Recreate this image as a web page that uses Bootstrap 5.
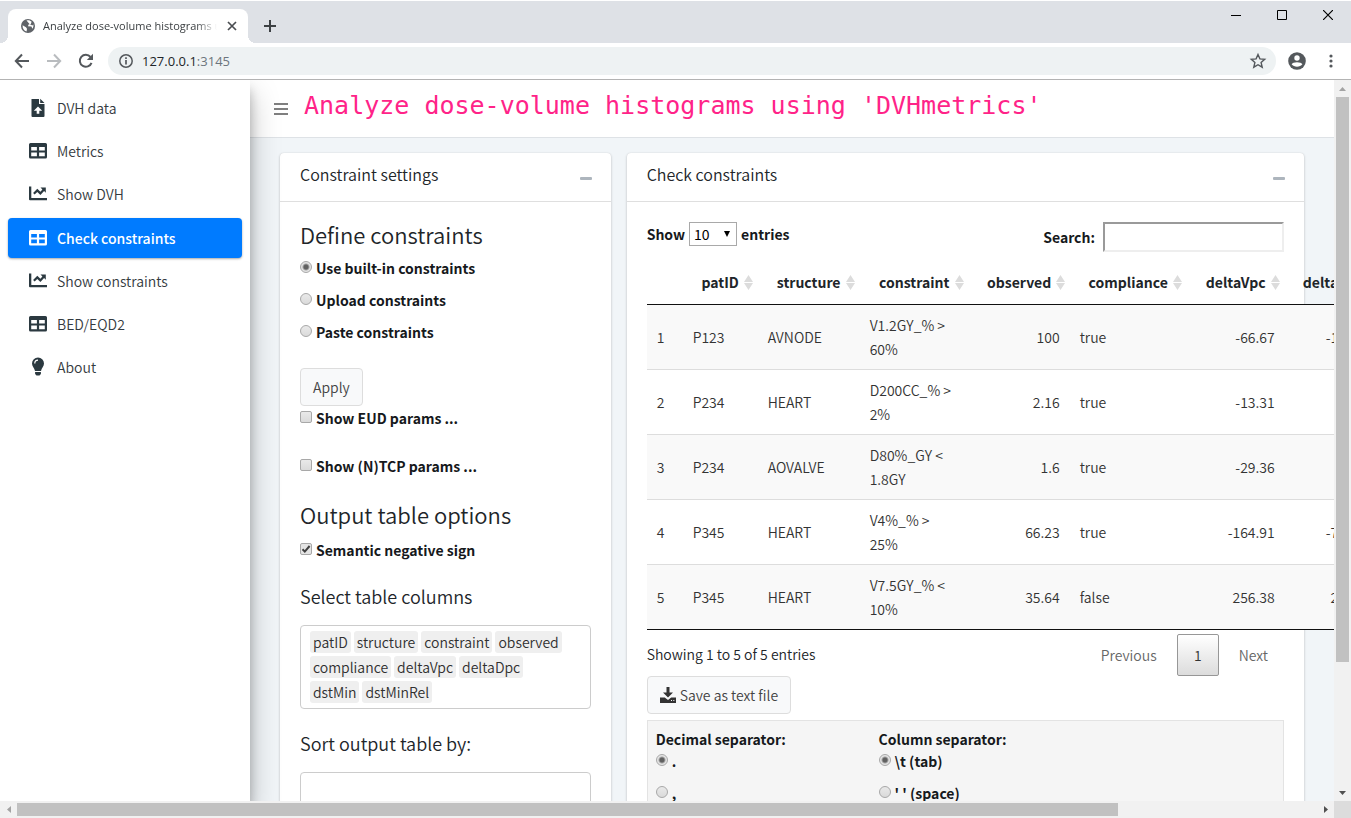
<!DOCTYPE html>
<html lang="en">
<head>
<meta charset="utf-8">
<meta name="viewport" content="width=device-width, initial-scale=1">
<title>Analyze dose-volume histograms using 'DVHmetrics'</title>
<link href="https://cdn.jsdelivr.net/npm/bootstrap@5.3.0/dist/css/bootstrap.min.css" rel="stylesheet">
<style>
  body {
    --bs-body-color: #212529;
    font-family: "Noto Sans CJK SC", "Open Sans", sans-serif;
    font-size: 14px;
    font-weight: 350;
    line-height: 24px;
    color: #212529;
    height: 100vh;
    overflow: hidden;
  }
  label, th { font-weight: 700; color: #16191c; }
  button, input, select { font: inherit; color: inherit; }

  /* browser window */
  .ui-font { font-family: "Open Sans", sans-serif; font-weight: 400; }
  .titlebar { background: #dee1e6; height: 43px; border-top: 1px solid #fff; }
  .browser-tab {
    position: relative;
    width: 240px; height: 34px;
    margin-left: 8px;
    padding: 0 9px 0 13px;
    background: #fff;
    border-radius: 8px 8px 0 0;
    color: #3c4043;
    font-size: 11px;
  }
  .browser-tab::before, .browser-tab::after {
    content: ""; position: absolute; bottom: 0; width: 8px; height: 8px;
  }
  .browser-tab::before { left: -8px; background: radial-gradient(circle at 0 0, transparent 8px, #fff 8px); }
  .browser-tab::after { right: -8px; background: radial-gradient(circle at 100% 0, transparent 8px, #fff 8px); }
  .tab-title {
    flex: 1 1 0; min-width: 0; overflow: hidden; white-space: nowrap;
    -webkit-mask-image: linear-gradient(90deg, #000 88%, transparent);
    mask-image: linear-gradient(90deg, #000 88%, transparent);
  }
  .plain-btn { border: 0; background: none; padding: 0; display: flex; align-items: center; justify-content: center; }
  .win-btn { width: 46px; height: 28px; }
  .toolbar { height: 37px; background: #fff; border-bottom: 1px solid #b3b3b3; padding: 0 4px 0 6px; }
  .nav-btn { width: 32px; height: 28px; }
  .omnibox { height: 28px; background: #eef2f3; border-radius: 14px; font-size: 13px; margin: 0 3px 0 6px; padding: 0 9px 0 8px; }
  .address { margin-left: 6px; }

  /* scroll bars */
  .track { background: #f1f1f1; }
  .track-v { width: 17px; }
  .track-h { height: 17px; }
  .thumb { background: #c1c1c1; }
  .track-v .thumb { width: 13px; }
  .track-h .thumb { height: 13px; }
  .arrow-box { width: 17px; height: 17px; flex: none; display: flex; align-items: center; justify-content: center; }
  .corner { width: 17px; background: #dcdcdc; }

  /* side bar */
  .side {
    width: 250px; flex: none; background: #fff; padding: 8px; z-index: 2;
    box-shadow: 0 14px 28px rgba(0,0,0,.25), 0 10px 10px rgba(0,0,0,.22);
  }
  .side .nav { gap: 3px; }
  .side .nav-link {
    height: 40px; padding: 8px 16px 8px 20px; color: #343a40; border-radius: 4px;
    display: flex; align-items: center; gap: 9px;
  }
  .side .nav-link svg { width: 20px; height: 20px; flex: none; fill: #2b3940; }
  .side .nav-link.active {
    background: #007bff; color: #fff; font-weight: 500; margin-top: 1px;
    box-shadow: 0 1px 3px rgba(0,0,0,.12), 0 1px 2px rgba(0,0,0,.24);
  }
  .side .nav-link.active svg { fill: #fff; }

  /* page */
  .page { background: #f1f5f8; min-width: 0; }
  .page-head { height: 58px; background: #fff; border-bottom: 1px solid #dee2e6; padding: 0 24px; }
  .page-title {
    font-family: "DejaVu Sans Mono", monospace; font-size: 25px; line-height: 32px; font-weight: 400;
    color: #ff2388; white-space: nowrap; margin: 0 0 6px 16px;
  }
  .page-body { padding: 15px 30px; }
  .panel {
    background: #fff; border: 0; border-radius: 4px;
    box-shadow: 0 0 1px rgba(0,0,0,.125), 0 1px 3px rgba(0,0,0,.2);
    height: 1100px;
  }
  .panel-head { height: 49px; border-bottom: 1px solid #dfdfdf; padding: 0 18px 6px 20px; }
  .panel-head h2 { font-size: 16px; line-height: 24px; margin: 0; font-weight: 350; }
  .panel-body { padding: 20px; }
  .sec-title { font-size: 22px; line-height: 24px; font-weight: 350; margin: 0 0 10px; }
  .choice + .sec-title { margin-bottom: 12px; }
  .sub-title { font-size: 18px; line-height: 24px; font-weight: 350; margin: 22px 0 17px; }

  .choice { display: flex; align-items: center; gap: 4px; }
  .choice input {
    appearance: none; flex: none; width: 12px; height: 12px; margin: 0 0 2px;
    border: 1px solid #a8a8a8; background: linear-gradient(#e9e9e9, #dadada);
  }
  .choice input[type=radio] { border-radius: 50%; }
  .choice input[type=checkbox] { border-radius: 2px; }
  .choice input[type=radio]:checked {
    background: radial-gradient(circle at center, #606060 0 2px, #e4e4e4 4px);
  }
  .choice input[type=checkbox]:checked {
    background: #e4e4e4 url("data:image/svg+xml,%3Csvg xmlns='http://www.w3.org/2000/svg' viewBox='0 0 10 10'%3E%3Cpath d='M1.5 5.2l2.3 2.4L8.6 2' fill='none' stroke='%23404040' stroke-width='2'/%3E%3C/svg%3E") center / 10px 10px no-repeat;
  }
  .btn-soft {
    height: 38px; padding: 0 12px; border: 1px solid #ddd; border-radius: 4px;
    background: #f8f9fa; color: #444; line-height: 24px; font-size: 14px; font-weight: 350;
  }
  .pick-box { border: 1px solid #ccc; border-radius: 4px; min-height: 84px; padding: 5px 18px 5px 9px; gap: 3px; }
  .pick { background: #efefef; border-radius: 3px; padding: 0 3px; line-height: 22px; color: #303030; }

  /* data table */
  .len-select {
    appearance: none; width: 48px; height: 24px; padding: 0 4px; border: 1px solid #a9a9a9; border-radius: 0;
    color: #000; font-weight: 400; line-height: 20px;
    background: #fff url("data:image/svg+xml,%3Csvg xmlns='http://www.w3.org/2000/svg' viewBox='0 0 6 6'%3E%3Cpath d='M0 0h6L3 6z'/%3E%3C/svg%3E") right 6px center / 6px 6px no-repeat;
  }
  .find-box { width: 181px; height: 30px; border: 2px solid; border-color: #9a9a9a #eee #eee #9a9a9a; border-radius: 0; }
  .grid-table { table-layout: fixed; width: 736px; border-collapse: separate; border-spacing: 0; color: #333; }
  .grid-table th {
    height: 45px; padding: 10px 18px; line-height: 24px; border-bottom: 1px solid #111; text-align: center; color: #212529;
  }
  .grid-table th.sorts {
    background: url("data:image/svg+xml,%3Csvg xmlns='http://www.w3.org/2000/svg' viewBox='0 0 9 15'%3E%3Cpath d='M4.5 0L9 7H0zM0 8h9l-4.500 7z' fill='%23dcdcdc'/%3E%3C/svg%3E") right 5px center / 9px 15px no-repeat;
  }
  .grid-table td { height: 65px; padding: 8px 10px; border-bottom: 1px solid #ddd; vertical-align: middle; background: #fff; }
  .grid-table tr:nth-child(odd) td { background: #f9f9f9; }
  .grid-table tr:last-child td { border-bottom-color: #111; }
  .num { text-align: right; }
  .w0 { width: 36px; } .w1 { width: 75px; } .w2 { width: 102px; } .w3 { width: 109px; }
  .w4 { width: 101px; } .w5 { width: 117px; } .w6 { width: 98px; }
  .pager { gap: 4px; padding-top: 4px; }
  .pager button { height: 42px; padding: 0 16px; border: 0; background: none; color: #666; }
  .pager .here { width: 42px; border: 1px solid #979797; border-radius: 2px; color: #333; background: linear-gradient(#fff, #dcdcdc); }
  .well { background: #f5f5f5; border: 1px solid #e3e3e3; margin-top: 6px; padding: 8px; height: 200px; }
  .well-title { font-weight: 700; line-height: 20px; color: #16191c; }
  .well .choice { margin-bottom: 8px; }
</style>
</head>
<body class="d-flex flex-column">

<header class="ui-font flex-shrink-0">
  <div class="titlebar d-flex align-items-end">
    <div class="browser-tab d-flex align-items-center">
      <svg width="14" height="14" viewBox="0 0 14 14" class="flex-shrink-0 me-2"><circle cx="7" cy="7" r="7" fill="#5f6368"/><path d="M1.600 6.200L5 8.200l1 1.500-.4 2.700C3 11.800 1.300 9.300 1.600 6.200zM5.500 1.500C8 1 9.500 1.700 10.600 2.800L9.800 5 7.500 5.600 7 7.200l3.400.3 1 2.200c.9-1 1.300-2.600.9-4.200l-1 1L8.500 5" fill="#fff"/></svg>
      <span class="tab-title">Analyze dose-volume histograms using 'DVHmetrics'</span>
      <button class="plain-btn ms-2" aria-label="Close tab"><svg width="14" height="14" viewBox="0 0 14 14"><path d="M3 3l8 8M11 3l-8 8" stroke="#4a4d51" stroke-width="1.700"/></svg></button>
    </div>
    <button class="plain-btn align-self-center ms-3 mt-2" aria-label="New tab"><svg width="12" height="14" viewBox="1 0 12 14"><path d="M7 1v12M1 7h12" stroke="#3c4043" stroke-width="2"/></svg></button>
    <div class="d-flex ms-auto align-self-start">
      <button class="plain-btn win-btn" aria-label="Minimize"><svg width="10" height="11" viewBox="0 0 10 11"><path d="M0 5.500h10" stroke="#000"/></svg></button>
      <button class="plain-btn win-btn" aria-label="Maximize"><svg width="10" height="10" viewBox="0 0 10 10"><path d="M.5.5h9v9H.5z" fill="none" stroke="#000"/></svg></button>
      <button class="plain-btn win-btn" aria-label="Close"><svg width="10" height="10" viewBox="0 0 10 10"><path d="M0 0l10 10M10 0L0 10" stroke="#000" stroke-width="1.200"/></svg></button>
    </div>
  </div>
  <div class="toolbar d-flex align-items-center">
    <button class="plain-btn nav-btn" aria-label="Back"><svg width="16" height="16" viewBox="0 0 16 16" fill="none" stroke="#54585c" stroke-width="2"><path d="M15 8H2M8 1.500L1.800 8 8 14.500"/></svg></button>
    <button class="plain-btn nav-btn" aria-label="Forward"><svg width="16" height="16" viewBox="0 0 16 16" fill="none" stroke="#b9bcbf" stroke-width="2"><path d="M1 8h13M8 1.500L14.200 8 8 14.500"/></svg></button>
    <button class="plain-btn nav-btn" aria-label="Reload"><svg width="16" height="16" viewBox="0 0 16 16"><path d="M13.500 9.800A6 6 0 1 1 12.500 4" fill="none" stroke="#54585c" stroke-width="2"/><path d="M15 .8V7H8.800z" fill="#54585c"/></svg></button>
    <div class="omnibox d-flex align-items-center flex-grow-1">
      <svg width="20" height="14" viewBox="0 0 20 14" class="flex-shrink-0"><circle cx="10" cy="7" r="6.200" fill="none" stroke="#54585c" stroke-width="1.500"/><path d="M10 6v4.500M10 3.300v1.700" stroke="#54585c" stroke-width="1.700"/></svg>
      <a href="#" class="address text-decoration-none text-dark">127.0.0.1<span class="text-secondary">:3145</span></a>
      <button class="plain-btn ms-auto" aria-label="Bookmark"><svg width="18" height="18" viewBox="0 0 18 18"><path d="M9 2.500l1.900 4.400 4.800.4-3.600 3.200 1.100 4.700L9 12.700l-4.200 2.500 1.100-4.700-3.600-3.200 4.800-.4z" fill="none" stroke="#54585c" stroke-width="1.400"/></svg></button>
    </div>
    <button class="plain-btn px-2" aria-label="Profile"><svg width="20" height="18" viewBox="0 0 20 18"><circle cx="10" cy="9" r="8.800" fill="#54585c"/><circle cx="10" cy="6" r="2.700" fill="#fff"/><path d="M4.600 12.300C5.500 9.600 14.500 9.600 15.400 12.300 13 15.600 7 15.600 4.600 12.300z" fill="#fff"/></svg></button>
    <button class="plain-btn nav-btn" aria-label="Menu"><svg width="4" height="14" viewBox="0 0 4 14" fill="#54585c"><circle cx="2" cy="2" r="1.600"/><circle cx="2" cy="7" r="1.600"/><circle cx="2" cy="12" r="1.600"/></svg></button>
  </div>
</header>

<svg class="d-none">
  <symbol id="i-file" viewBox="0 0 20 20"><path d="M3.500 1h7.500v5h5.500V18a1 1 0 0 1-1 1h-11a1 1 0 0 1-1-1zM12.200.8l4.300 4.200h-4.300zM10 8.500L5.800 12.700h2.900v3h2.600v-3h2.900z" fill-rule="evenodd"/></symbol>
  <symbol id="i-table" viewBox="0 0 20 20"><path d="M2.500 2h15a1.500 1.500 0 0 1 1.500 1.500v12.500a1.500 1.500 0 0 1-1.500 1.500h-15A1.500 1.500 0 0 1 1 16V3.500A1.500 1.500 0 0 1 2.500 2zM3.200 6v3.600h5.700V6zM11.100 6v3.600h5.700V6zM3.200 11.600v3.600h5.700v-3.600zM11.100 11.600v3.600h5.700v-3.600z" fill-rule="evenodd"/></symbol>
  <symbol id="i-chart" viewBox="0 0 20 20"><path d="M1 2.500h2.300V14H19v2.300H2A1 1 0 0 1 1 15.300zM12.500 3.500h5.300v5.300l-1.700-1.700-3.700 3.800-3.100-3-2.700 2.700-1.500-1.600 4.200-4.200 3.100 3 2-2.300z"/></symbol>
  <symbol id="i-bulb" viewBox="0 0 20 20"><path d="M10 .5a6 6 0 0 0-6 6c0 3 2.500 4.500 3 7.500h6c.5-3 3-4.500 3-7.500a6 6 0 0 0-6-6zM6.200 6.500A3.900 3.900 0 0 1 10 2.500v1.200A2.700 2.700 0 0 0 7.400 6.500zM7.100 15h5.800v2L11.500 18.500h-3l-1.400-1.500z" fill-rule="evenodd"/></symbol>
</svg>

<div class="d-flex flex-grow-1 overflow-hidden">
  <div class="d-flex flex-grow-1 overflow-hidden">
    <aside class="side">
      <nav class="nav flex-column">
        <a class="nav-link" href="#"><svg><use href="#i-file"/></svg>DVH data</a>
        <a class="nav-link" href="#"><svg><use href="#i-table"/></svg>Metrics</a>
        <a class="nav-link" href="#"><svg><use href="#i-chart"/></svg>Show DVH</a>
        <a class="nav-link active" href="#"><svg><use href="#i-table"/></svg>Check constraints</a>
        <a class="nav-link" href="#"><svg><use href="#i-chart"/></svg>Show constraints</a>
        <a class="nav-link" href="#"><svg><use href="#i-table"/></svg>BED/EQD2</a>
        <a class="nav-link" href="#"><svg><use href="#i-bulb"/></svg>About</a>
      </nav>
    </aside>

    <main class="page flex-grow-1 overflow-hidden">
      <div class="page-head d-flex align-items-center">
        <button class="plain-btn" aria-label="Toggle menu"><svg width="14" height="14" viewBox="0 0 14 14"><path d="M0 2h14M0 7h14M0 12h14" stroke="#7f7f7f" stroke-width="2"/></svg></button>
        <h1 class="page-title">Analyze dose-volume histograms using 'DVHmetrics'</h1>
      </div>

      <div class="page-body">
        <div class="row gx-3 flex-nowrap">
          <div class="col-4">
            <section class="panel">
              <div class="panel-head d-flex align-items-center justify-content-between">
                <h2>Constraint settings</h2>
                <button class="plain-btn pt-2" aria-label="Collapse"><svg width="14" height="4" viewBox="0 0 14 4"><rect x="1" y="1" width="12" height="3" rx="1" fill="#adb5bd"/></svg></button>
              </div>
              <div class="panel-body">
                <h3 class="sec-title">Define constraints</h3>
                <div class="d-flex flex-column gap-2 mb-4">
                  <label class="choice"><input type="radio" name="src" checked>Use built-in constraints</label>
                  <label class="choice"><input type="radio" name="src">Upload constraints</label>
                  <label class="choice"><input type="radio" name="src">Paste constraints</label>
                </div>
                <button class="btn btn-soft d-block">Apply</button>
                <label class="choice mb-4"><input type="checkbox">Show EUD params ...</label>
                <label class="choice mb-4"><input type="checkbox">Show (N)TCP params ...</label>
                <h3 class="sec-title">Output table options</h3>
                <label class="choice"><input type="checkbox" checked>Semantic negative sign</label>
                <h4 class="sub-title">Select table columns</h4>
                <div class="pick-box d-flex flex-wrap align-content-start">
                  <span class="pick">patID</span><span class="pick">structure</span><span class="pick">constraint</span><span class="pick">observed</span>
                  <span class="pick">compliance</span><span class="pick">deltaVpc</span><span class="pick">deltaDpc</span>
                  <span class="pick">dstMin</span><span class="pick">dstMinRel</span>
                </div>
                <h4 class="sub-title">Sort output table by:</h4>
                <div class="pick-box"></div>
              </div>
            </section>
          </div>

          <div class="col-8">
            <section class="panel">
              <div class="panel-head d-flex align-items-center justify-content-between">
                <h2>Check constraints</h2>
                <button class="plain-btn pt-2" aria-label="Collapse"><svg width="14" height="4" viewBox="0 0 14 4"><rect x="1" y="1" width="12" height="3" rx="1" fill="#adb5bd"/></svg></button>
              </div>
              <div class="panel-body">
                <div class="d-flex justify-content-between align-items-start mb-2">
                  <label class="d-flex gap-1">Show <select class="len-select"><option>10</option><option>25</option></select> entries</label>
                  <label class="d-flex align-items-center gap-2">Search: <input type="search" class="find-box"></label>
                </div>
                <table class="grid-table">
                  <colgroup><col class="w0"><col class="w1"><col class="w2"><col class="w3"><col class="w4"><col class="w5"><col class="w6"><col class="w6"></colgroup>
                  <thead>
                    <tr><th></th><th class="sorts">patID</th><th class="sorts">structure</th><th class="sorts">constraint</th><th class="sorts">observed</th><th class="sorts">compliance</th><th class="sorts">deltaVpc</th><th class="sorts">deltaDpc</th></tr>
                  </thead>
                  <tbody>
                    <tr><td>1</td><td>P123</td><td>AVNODE</td><td>V1.2GY_% &gt; 60%</td><td class="num">100</td><td>true</td><td class="num">-66.67</td><td class="num">-185.71</td></tr>
                    <tr><td>2</td><td>P234</td><td>HEART</td><td>D200CC_% &gt; 2%</td><td class="num">2.16</td><td>true</td><td class="num">-13.31</td><td class="num">-7.5</td></tr>
                    <tr><td>3</td><td>P234</td><td>AOVALVE</td><td>D80%_GY &lt; 1.8GY</td><td class="num">1.6</td><td>true</td><td class="num">-29.36</td><td class="num">-11.1</td></tr>
                    <tr><td>4</td><td>P345</td><td>HEART</td><td>V4%_% &gt; 25%</td><td class="num">66.23</td><td>true</td><td class="num">-164.91</td><td class="num">-749.81</td></tr>
                    <tr><td>5</td><td>P345</td><td>HEART</td><td>V7.5GY_% &lt; 10%</td><td class="num">35.64</td><td>false</td><td class="num">256.38</td><td class="num">249.38</td></tr>
                  </tbody>
                </table>
                <div class="d-flex justify-content-between align-items-start">
                  <span class="pt-2 mt-1">Showing 1 to 5 of 5 entries</span>
                  <div class="pager d-flex">
                    <button disabled>Previous</button>
                    <button class="here">1</button>
                    <button disabled>Next</button>
                  </div>
                </div>
                <button class="btn btn-soft d-flex align-items-center gap-1"><svg width="16" height="16" viewBox="0 0 16 16" fill="#333"><path d="M6.500 0h3v5.500h3.500L8 10.500 3 5.500h3.500zM0 10.500h4.800L8 13l3.200-2.500H16V16H0zM11 14h1v-1h-1zM13.300 14h1v-1h-1z" fill-rule="evenodd"/></svg>Save as text file</button>
                <div class="well">
                  <div class="row gx-0">
                    <div class="col" style="flex:0 0 36%">
                      <div class="well-title">Decimal separator:</div>
                      <label class="choice"><input type="radio" name="dec" checked>.</label>
                      <label class="choice"><input type="radio" name="dec">,</label>
                    </div>
                    <div class="col">
                      <div class="well-title">Column separator:</div>
                      <label class="choice"><input type="radio" name="colsep" checked>\t (tab)</label>
                      <label class="choice"><input type="radio" name="colsep">' ' (space)</label>
                    </div>
                  </div>
                </div>
              </div>
            </section>
          </div>
        </div>
      </div>
    </main>
  </div>
  <div class="track track-v d-flex flex-column align-items-center flex-shrink-0">
    <span class="arrow-box"><svg width="7" height="4" viewBox="0 0 7 4"><path d="M0 4h7L3.500 0z" fill="#a3a3a3"/></svg></span>
    <div class="thumb" style="height:78.400%"></div>
    <span class="arrow-box mt-auto"><svg width="7" height="4" viewBox="0 0 7 4"><path d="M0 0h7L3.500 4z" fill="#505050"/></svg></span>
  </div>
</div>
<div class="d-flex flex-shrink-0">
  <div class="track track-h d-flex align-items-center flex-grow-1">
    <span class="arrow-box"><svg width="4" height="7" viewBox="0 0 4 7"><path d="M4 0v7L0 3.500z" fill="#a3a3a3"/></svg></span>
    <div class="thumb" style="width:82.500%"></div>
    <span class="arrow-box ms-auto"><svg width="4" height="7" viewBox="0 0 4 7"><path d="M0 0v7l4-3.500z" fill="#505050"/></svg></span>
  </div>
  <div class="corner"></div>
</div>

<script src="https://cdn.jsdelivr.net/npm/bootstrap@5.3.0/dist/js/bootstrap.bundle.min.js"></script>
</body>
</html>
